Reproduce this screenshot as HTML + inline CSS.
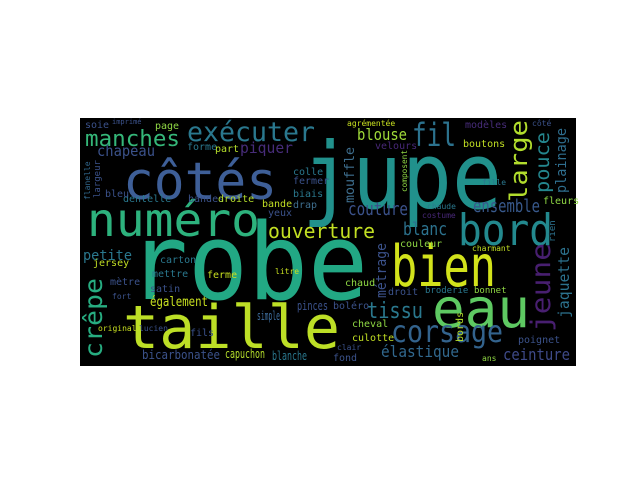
<!DOCTYPE html>
<html><head><meta charset="utf-8"><style>html,body{margin:0;padding:0;background:#fff;width:640px;height:480px;overflow:hidden}svg{display:block}text{font-family:"DejaVu Sans Mono","Liberation Mono",monospace}</style></head>
<body>
<svg width="640" height="480" viewBox="0 0 640 480" xmlns="http://www.w3.org/2000/svg">
<rect x="0" y="0" width="640" height="480" fill="#fff"/>
<rect x="80" y="118" width="496" height="248" fill="#000"/>
<g>
<text x="302" y="208" font-size="92" fill="#21918c" textLength="200" lengthAdjust="spacingAndGlyphs">jupe</text>
<text x="128" y="299" font-size="106" fill="#22a884" textLength="240" lengthAdjust="spacingAndGlyphs">robe</text>
<text x="123" y="348" font-size="60" fill="#bddf26" textLength="217" lengthAdjust="spacingAndGlyphs">taille</text>
<text x="123" y="199" font-size="52" fill="#3e5f98" textLength="154" lengthAdjust="spacingAndGlyphs">côtés</text>
<text x="87" y="236" font-size="46" fill="#2db27d" textLength="173" lengthAdjust="spacingAndGlyphs">numéro</text>
<text x="391" y="286" font-size="57" fill="#d2e21b" textLength="105" lengthAdjust="spacingAndGlyphs">bien</text>
<text x="432" y="327" font-size="54" fill="#5ec962" textLength="98" lengthAdjust="spacingAndGlyphs">eau</text>
<text x="458" y="245" font-size="44" fill="#23898e" textLength="95" lengthAdjust="spacingAndGlyphs">bord</text>
<text x="391" y="342" font-size="30" fill="#33638d" textLength="112" lengthAdjust="spacingAndGlyphs">corsage</text>
<text x="187" y="141" font-size="27" fill="#2a788e" textLength="128" lengthAdjust="spacingAndGlyphs">exécuter</text>
<text x="85" y="146" font-size="22" fill="#35b779" textLength="95" lengthAdjust="spacingAndGlyphs">manches</text>
<text x="412" y="146" font-size="32" fill="#2c728e" textLength="44" lengthAdjust="spacingAndGlyphs">fil</text>
<text x="268" y="238" font-size="20" fill="#c2df23" textLength="107" lengthAdjust="spacingAndGlyphs">ouverture</text>
<text x="367" y="318" font-size="22" fill="#2a788e" textLength="56" lengthAdjust="spacingAndGlyphs">tissu</text>
<text x="348" y="215" font-size="18" fill="#3b528b" textLength="60" lengthAdjust="spacingAndGlyphs">couture</text>
<text x="473" y="212" font-size="18" fill="#38598c" textLength="67" lengthAdjust="spacingAndGlyphs">ensemble</text>
<text x="403" y="235" font-size="18" fill="#2c728e" textLength="44" lengthAdjust="spacingAndGlyphs">blanc</text>
<text x="357" y="140" font-size="16" fill="#a0da39" textLength="50" lengthAdjust="spacingAndGlyphs">blouse</text>
<text x="97" y="156" font-size="15" fill="#3b528b" textLength="58" lengthAdjust="spacingAndGlyphs">chapeau</text>
<text x="240" y="153" font-size="15" fill="#472c7a" textLength="53" lengthAdjust="spacingAndGlyphs">piquer</text>
<text x="381" y="357" font-size="16" fill="#31688e" textLength="78" lengthAdjust="spacingAndGlyphs">élastique</text>
<text x="503" y="360" font-size="16" fill="#3e4a89" textLength="67" lengthAdjust="spacingAndGlyphs">ceinture</text>
<text x="150" y="306" font-size="13" fill="#c8e020" textLength="58" lengthAdjust="spacingAndGlyphs">également</text>
<text x="83" y="260" font-size="14" fill="#2a788e" textLength="49" lengthAdjust="spacingAndGlyphs">petite</text>
<text x="142" y="359" font-size="12" fill="#3b528b" textLength="78" lengthAdjust="spacingAndGlyphs">bicarbonatée</text>
<text x="225" y="358" font-size="12" fill="#b5de2b" textLength="40" lengthAdjust="spacingAndGlyphs">capuchon</text>
<text x="272" y="360" font-size="12" fill="#2a788e" textLength="35" lengthAdjust="spacingAndGlyphs">blanche</text>
<text x="297" y="310" font-size="12" fill="#3b528b" textLength="31" lengthAdjust="spacingAndGlyphs">pinces</text>
<text x="257" y="320" font-size="12" fill="#3e6e9e" textLength="23" lengthAdjust="spacingAndGlyphs">simple</text>
<text transform="translate(102,358) rotate(-90)" font-size="25" fill="#27ad81" textLength="80" lengthAdjust="spacingAndGlyphs">crêpe</text>
<text transform="translate(527,202) rotate(-90)" font-size="24" fill="#b2dd2d" textLength="82" lengthAdjust="spacingAndGlyphs">large</text>
<text transform="translate(549,193) rotate(-90)" font-size="19" fill="#24868e" textLength="61" lengthAdjust="spacingAndGlyphs">pouce</text>
<text transform="translate(566,193) rotate(-90)" font-size="14" fill="#2e6e8e" textLength="65" lengthAdjust="spacingAndGlyphs">plainage</text>
<text transform="translate(550,332) rotate(-90)" font-size="27" fill="#481f70" textLength="89" lengthAdjust="spacingAndGlyphs">jeune</text>
<text transform="translate(569,318) rotate(-90)" font-size="15" fill="#2c728e" textLength="71" lengthAdjust="spacingAndGlyphs">jaquette</text>
<text transform="translate(354,203) rotate(-90)" font-size="13" fill="#3e6e8e" textLength="56" lengthAdjust="spacingAndGlyphs">mouffle</text>
<text transform="translate(386,298) rotate(-90)" font-size="14" fill="#3b528b" textLength="55" lengthAdjust="spacingAndGlyphs">métrage</text>
<text transform="translate(407,192) rotate(-90)" font-size="8" fill="#8fd744" textLength="42" lengthAdjust="spacingAndGlyphs">composent</text>
<text transform="translate(100,198) rotate(-90)" font-size="9" fill="#3b528b">largeur</text>
<text transform="translate(90,200) rotate(-90)" font-size="8" fill="#31688e">flanelle</text>
<text transform="translate(463,342) rotate(-90)" font-size="10" fill="#b5de2b">bords</text>
<text transform="translate(555,242) rotate(-90)" font-size="9" fill="#2c728e">rien</text>
<g font-size="10">
<text x="85" y="128" fill="#3b528b">soie</text>
<text x="112" y="124" font-size="7" fill="#3b528b">imprimé</text>
<text x="155" y="129" fill="#8fd744">page</text>
<text x="187" y="150" fill="#2a788e">forme</text>
<text x="215" y="152" fill="#b5de2b">part</text>
<text x="293" y="175" fill="#2a788e">colle</text>
<text x="293" y="184" fill="#3b528b">fermer</text>
<text x="293" y="197" fill="#2a788e">biais</text>
<text x="293" y="208" fill="#3e6e8e">drap</text>
<text x="123" y="202" fill="#2a788e">dentelle</text>
<text x="188" y="202" fill="#3b528b">bandes</text>
<text x="218" y="202" fill="#b5de2b">droite</text>
<text x="262" y="207" fill="#c2df23">bande</text>
<text x="268" y="216" fill="#3b528b">yeux</text>
<text x="105" y="197" fill="#3b528b">bleu</text>
<text x="93" y="266" fill="#c2df23">jersey</text>
<text x="110" y="285" fill="#3b528b">mètre</text>
<text x="112" y="299" font-size="8" fill="#3b528b">fort</text>
<text x="160" y="263" fill="#2a788e">carton</text>
<text x="152" y="277" fill="#2a788e">mettre</text>
<text x="150" y="292" fill="#3b528b">satin</text>
<text x="207" y="278" fill="#c8e020">ferme</text>
<text x="275" y="274" font-size="8" fill="#c8e020">litre</text>
<text x="190" y="336" fill="#3b528b">fils</text>
<text x="139" y="331" font-size="8" fill="#3b528b">lucien</text>
<text x="98" y="331" font-size="8" fill="#c8e020">original</text>
<text x="347" y="126" font-size="8" fill="#c8e020">agrémentée</text>
<text x="375" y="149" fill="#482878">velours</text>
<text x="465" y="128" fill="#472c7a">modèles</text>
<text x="463" y="147" fill="#c2df23">boutons</text>
<text x="532" y="126" font-size="8" fill="#3b528b">côté</text>
<text x="543" y="204" fill="#8fd744">fleurs</text>
<text x="427" y="209" font-size="8" fill="#2a788e">chaude</text>
<text x="422" y="218" font-size="8" fill="#482878">costume</text>
<text x="482" y="185" font-size="8" fill="#2a788e">fille</text>
<text x="400" y="247" fill="#8fd744">couleur</text>
<text x="472" y="251" font-size="8" fill="#c2df23">charmant</text>
<text x="388" y="295" fill="#3b528b">droit</text>
<text x="425" y="293" font-size="9" fill="#2a788e">broderie</text>
<text x="474" y="293" font-size="9" fill="#8fd744">bonnet</text>
<text x="345" y="286" fill="#8fd744">chaud</text>
<text x="352" y="327" fill="#8fd744">cheval</text>
<text x="352" y="341" fill="#c2df23">culotte</text>
<text x="518" y="343" fill="#3b528b">poignet</text>
<text x="337" y="350" font-size="8" fill="#3b528b">clair</text>
<text x="333" y="361" fill="#3b528b">fond</text>
<text x="333" y="309" fill="#3b528b">boléro</text>
<text x="482" y="361" font-size="8" fill="#8fd744">ans</text>
</g>
</g>
</svg>
</body></html>
